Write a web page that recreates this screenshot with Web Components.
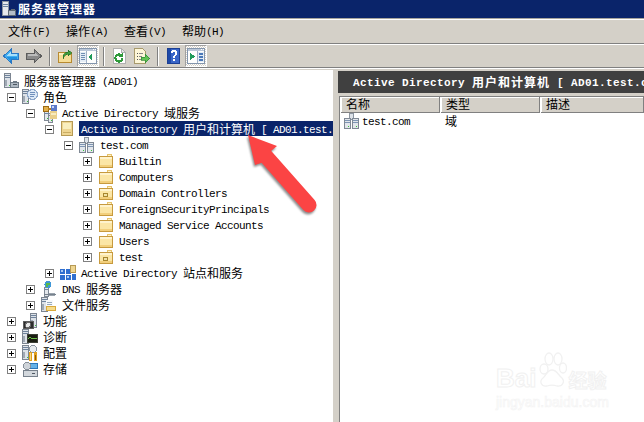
<!DOCTYPE html>
<html lang="zh">
<head>
<meta charset="utf-8">
<title>服务器管理器</title>
<style>
  html, body { margin: 0; padding: 0; width: 644px; height: 422px; overflow: hidden; background: #d4d0c8; }
  body { font: 12px/16px "Noto Sans CJK SC", "Liberation Sans", sans-serif; color: #000; }
</style>
</head>
<body>

<mmc-window>
  <mmc-titlebar slot="title">服务器管理器</mmc-titlebar>
  <mmc-menubar slot="menu">
    <menu-item>文件<la-t>(F)</la-t></menu-item>
    <menu-item>操作<la-t>(A)</la-t></menu-item>
    <menu-item>查看<la-t>(V)</la-t></menu-item>
    <menu-item>帮助<la-t>(H)</la-t></menu-item>
  </mmc-menubar>
  <mmc-toolbar slot="tools">
    <tool-btn icon="back"></tool-btn>
    <tool-btn icon="forward"></tool-btn>
    <tool-sep></tool-sep>
    <tool-btn icon="up"></tool-btn>
    <tool-btn icon="paneleft" pressed></tool-btn>
    <tool-sep></tool-sep>
    <tool-btn icon="refresh"></tool-btn>
    <tool-btn icon="export"></tool-btn>
    <tool-sep></tool-sep>
    <tool-btn icon="help"></tool-btn>
    <tool-btn icon="paneright" pressed></tool-btn>
  </mmc-toolbar>

  <mmc-tree slot="tree">
    <tree-row level="-1" icon="server"><span>服务器管理器<la-t> (AD01)</la-t></span></tree-row>
    <tree-row level="0" state="minus" icon="roles">角色</tree-row>
    <tree-row level="1" state="minus" icon="adds"><span><la-t>Active Directory </la-t>域服务</span></tree-row>
    <tree-row level="2" state="minus" icon="aduc" selected><span><la-t>Active Directory </la-t>用户和计算机<la-t> [ AD01.test.</la-t></span></tree-row>
    <tree-row level="3" state="minus" icon="domain"><la-t>test.com</la-t></tree-row>
    <tree-row level="4" state="plus" icon="folder"><la-t>Builtin</la-t></tree-row>
    <tree-row level="4" state="plus" icon="folder"><la-t>Computers</la-t></tree-row>
    <tree-row level="4" state="plus" icon="ou"><la-t>Domain Controllers</la-t></tree-row>
    <tree-row level="4" state="plus" icon="folder"><la-t>ForeignSecurityPrincipals</la-t></tree-row>
    <tree-row level="4" state="plus" icon="folder"><la-t>Managed Service Accounts</la-t></tree-row>
    <tree-row level="4" state="plus" icon="folder"><la-t>Users</la-t></tree-row>
    <tree-row level="4" state="plus" icon="ou"><la-t>test</la-t></tree-row>
    <tree-row level="2" state="plus" icon="sites"><span><la-t>Active Directory </la-t>站点和服务</span></tree-row>
    <tree-row level="1" state="plus" icon="dns"><span><la-t>DNS </la-t>服务器</span></tree-row>
    <tree-row level="1" state="plus" icon="files">文件服务</tree-row>
    <tree-row level="0" state="plus" icon="features">功能</tree-row>
    <tree-row level="0" state="plus" icon="diag">诊断</tree-row>
    <tree-row level="0" state="plus" icon="config">配置</tree-row>
    <tree-row level="0" state="plus" icon="storage">存储</tree-row>
  </mmc-tree>

  <mmc-details slot="details">
    <span slot="heading"><la-t>Active Directory </la-t>用户和计算机<la-t> [ AD01.test.c</la-t></span>
    <list-head slot="cols" style="width:99px;padding-left:5px">名称</list-head>
    <list-head slot="cols" style="width:99px">类型</list-head>
    <list-head slot="cols" style="flex:1">描述</list-head>
    <list-row slot="rows" icon="domain" kind="域"><la-t>test.com</la-t></list-row>
  </mmc-details>

  <red-arrow slot="over"></red-arrow>
  <baidu-mark slot="over"></baidu-mark>
</mmc-window>

<script>
// little helper, every element below does the same thing in its constructor
function shadow(el, html) {
  el.attachShadow({ mode: 'open' });
  el.shadowRoot.innerHTML = html;
}

const r = (x, y, w, h, c) => `<rect x="${x}" y="${y}" width="${w}" height="${h}" fill="${c}"/>`;

// tower shape shared by the role icons
const tower = (x, y) =>
  r(x, y, 7, 15, '#7c8591') + r(x + 1, y + 1, 5, 13, '#dde2e8') + r(x + 1, y + 2, 5, 1, '#6f839c') +
  r(x + 1, y + 4, 5, 1, '#6f839c') + r(x + 5, y + 12, 1, 1, '#3ac43a') + r(x + 1, y + 7, 2, 6, '#a0a9b4');

const small = (x, y) =>
  r(x, y, 5, 10, '#7f8894') + r(x + 1, y + 1, 3, 8, '#e3e7ec') + r(x + 1, y + 2, 3, 1, '#6f86a4') + r(x + 3, y + 7, 1, 1, '#35c335');

const folderBody =
  r(9, 1, 5, 2, '#e6c36e') + r(10, 2, 3, 1, '#fff3c8') +
  r(1, 3, 14, 12, '#c79a3e') + r(2, 4, 12, 10, '#fbe6a6') + r(2, 4, 12, 2, '#fff3cd') + r(2, 12, 12, 2, '#f2cf7c');

// window with a scope pane, shared by the two pressed buttons
const paneWin =
  r(-1, 0, 18, 16, '#8496ad') + r(0, 1, 16, 2, '#b9c6d8') + r(13, 1, 1, 1, '#fff') + r(15, 1, 1, 1, '#fff') + r(0, 3, 16, 12, '#fdfdfd');

const ICONS = {
  back: `<path d="M.5 8 8 1.500V5h7.500v6H8v3.500z" fill="#42aef0" stroke="#2b78c4"/><path d="M3 8 7.500 4v2H14v2H4z" fill="#a6e0fc"/><path d="M3 8.500h11v2H7.500V13z" fill="#1e90e0"/>`,
  forward: `<path d="M15.500 8 8 1.500V5H.5v6H8v3.500z" fill="#8a8a8a" stroke="#5c5c5c"/><path d="M13 8 8.500 4v2H2v2h10z" fill="#bcbcbc"/>`,
  up: r(1, 4, 14, 11, '#b88a30') + r(2, 5, 12, 9, '#f6dd96') + r(2, 5, 5, 2, '#fff0c0') +
      `<path d="M6 11c0-5 2-7 5-7V2l4 3-4 3V6c-1 0-3 1-5 5z" fill="#3f9a3f" stroke="#1f6f1f" stroke-width=".6"/>`,
  paneleft: paneWin + r(0, 4, 6, 10, '#e4ecf5') + r(1, 5, 4, 1, '#6f8db3') + r(1, 7, 4, 1, '#6f8db3') + r(1, 9, 4, 1, '#6f8db3') + r(1, 11, 4, 1, '#6f8db3') + r(6, 3, 1, 12, '#9fb0c6') + `<path d="M12 6v6L8 9z" fill="#1f9a5a"/>`,
  paneright: paneWin + r(10, 4, 6, 10, '#e4ecf5') + r(11, 5, 4, 2, '#4a78b8') + r(11, 8, 4, 2, '#4a78b8') + r(11, 11, 4, 2, '#4a78b8') + r(9, 3, 1, 12, '#9fb0c6') + `<path d="M2 5v7l5-3.500z" fill="#1f9a5a"/>`,
  refresh: `<path d="M2 .5h8l4 4v11H2z" fill="#fff" stroke="#b0b0b0"/><path d="M10 .5v4h4" fill="#e7e7e7" stroke="#b0b0b0"/>` +
      `<path d="M11.500 10a3.600 3.600 0 1 1-1.200-2.700" fill="none" stroke="#2f9a3a" stroke-width="2.200"/><path d="M12 4.500v4.500H8z" fill="#2f9a3a"/>`,
  export: `<path d="M.5 .5h8l3 3v12H.5z" fill="#fdf6d8" stroke="#a89a6c"/>` + r(3, 5, 1, 1, '#555') + r(5, 5, 4, 1, '#888') + r(3, 8, 1, 1, '#555') + r(5, 8, 3, 1, '#888') + r(3, 11, 1, 1, '#555') + r(5, 11, 2, 1, '#888') +
      `<path d="M7 9h4V6l5 4.500-5 4.500v-3H7z" fill="#62c255" stroke="#2f8a35" stroke-width=".7"/>`,
  help: r(2, 0, 13, 16, '#1c3f94') + r(3, 1, 11, 14, '#3a66c8') + r(3, 1, 3, 14, '#1f4aa8') +
      `<path d="M6.500 5c0-3 5-3 5 0 0 2-2.500 2-2.500 4.500" fill="none" stroke="#fff" stroke-width="1.800"/>` + r(8, 11, 2, 2, '#fff'),
  server: tower(1, 0) + r(7, 9, 9, 6, '#6e7a86') + r(8, 10, 7, 4, '#aeb8c2') + r(10, 8, 4, 1, '#6e7a86') + r(10, 11, 4, 1, '#4d5863'),
  roles: tower(0, 0) + `<circle cx="10.500" cy="5.500" r="5" fill="#dce8f6" stroke="#8fa9cc"/><path d="M8 3.500h5M8 5.500h5M8 7.500h4" stroke="#6f8fbc"/>`,
  adds: small(3, 6) + small(7, 8) + `<circle cx="5" cy="4" r="3" fill="#e3b04a" stroke="#9c6a14"/>` + r(7, 3, 6, 2, '#b77f20') + r(10, 0, 6, 6, '#5b78c8') + r(11, 1, 2, 2, '#c7d5f5') +
      r(9, 6, 7, 8, '#e9cf8a') + r(10, 8, 5, 2, '#f7ebc0'),
  aduc: r(1, 0, 12, 15, '#b69a55') + r(2, 1, 10, 13, '#eed591') + r(3, 2, 8, 6, '#f9eebe') + r(3, 11, 8, 1, '#c9ac63'),
  domain: r(5, 0, 5, 7, '#8c95a0') + r(6, 1, 3, 5, '#dde2e8') + r(0, 5, 7, 11, '#7f8894') + r(1, 6, 5, 9, '#e2e6eb') + r(1, 7, 5, 1, '#7e95b4') + r(1, 9, 5, 1, '#7e95b4') + r(4, 13, 1, 1, '#34c634') +
      r(8, 5, 7, 11, '#7f8894') + r(9, 6, 5, 9, '#e2e6eb') + r(9, 7, 5, 1, '#7e95b4') + r(9, 9, 5, 1, '#7e95b4') + r(12, 13, 1, 1, '#34c634'),
  folder: folderBody,
  ou: folderBody + r(5, 8, 5, 4, '#a8862f') + r(6, 9, 3, 2, '#f1e3a8'),
  sites: r(0, 4, 5, 5, '#2f6fd0') + r(0, 10, 5, 5, '#2f6fd0') + r(6, 4, 5, 5, '#2f6fd0') + r(6, 10, 5, 5, '#2f6fd0') + r(1, 5, 2, 2, '#a9c9f2') + r(7, 11, 2, 2, '#a9c9f2') +
      r(12, 9, 4, 6, '#2f6fd0') + r(10, 0, 6, 8, '#b69a55') + r(11, 1, 4, 6, '#eed591'),
  dns: small(3, 6) + `<circle cx="7" cy="3.500" r="3.500" fill="#3f97d8"/><path d="M5 2h4v2H7v2H5z" fill="#58b84b"/>` + r(8, 12, 6, 3, '#9aa4ae') + r(3, 13, 12, 1, '#77818c'),
  files: tower(0, 0) + r(5, 3, 7, 7, '#f6f8fb') + r(6, 5, 5, 1, '#9ab') + r(6, 7, 5, 1, '#9ab') + r(5, 9, 10, 5, '#d9a93c') + r(6, 10, 8, 3, '#f6db8a'),
  features: tower(8, 0) + r(1, 8, 11, 8, '#5e5e5e') + r(2, 9, 9, 6, '#2d2d2d') + `<circle cx="6" cy="12" r="2.500" fill="#e8e8e8" stroke="#666"/>`,
  diag: tower(0, 0) + r(5, 5, 11, 9, '#3d4036') + r(6, 6, 9, 7, '#1a1d12') + `<path d="M6 10l2-2 2 2 2-1 3 1" fill="none" stroke="#6ec24a"/>`,
  config: tower(0, 0) + `<circle cx="11" cy="4" r="3.500" fill="#e8ecef" stroke="#8b95a0"/>` + r(7, 7, 3, 9, '#e2a21f') + r(12, 7, 3, 9, '#e2a21f') + r(8, 8, 1, 7, '#f8d880') + r(13, 10, 1, 5, '#8a5a10'),
  storage: r(1, 9, 15, 7, '#77818c') + r(2, 10, 13, 5, '#d3d8dd') + r(10, 12, 3, 1, '#4f5964') + r(5, 2, 11, 6, '#2d77b8') + r(6, 3, 9, 4, '#66b2e8') +
      `<circle cx="5" cy="5" r="3.500" fill="#cfd4d9" stroke="#8a929a"/>`
};

// 11px mono squeezed to 6px a letter, next to 12px CJK: same ratio as the old bitmap font
class LaT extends HTMLElement {
  constructor() {
    super();
    shadow(this, `<style>:host{font-family:"Liberation Mono",monospace;font-size:11px;letter-spacing:calc(var(--ls, 0px) - .6px);white-space:pre;vertical-align:1px}</style><slot></slot>`);
  }
}
customElements.define('la-t', LaT);

class MmcIcon extends HTMLElement {
  static get observedAttributes() { return ['name']; }
  constructor() {
    super();
    this.attachShadow({ mode: 'open' });
  }
  attributeChangedCallback() {
    this.shadowRoot.innerHTML = `<style>:host{display:block;width:16px;height:16px}svg{display:block;overflow:visible}</style>
      <svg width="16" height="16" viewBox="0 0 16 16" shape-rendering="crispEdges">${ICONS[this.getAttribute('name')] || ''}</svg>`;
  }
}
customElements.define('mmc-icon', MmcIcon);

class MmcWindow extends HTMLElement {
  constructor() {
    super();
    shadow(this, `<style>
      :host { display: flex; flex-direction: column; position: relative; width: 644px; height: 422px; overflow: hidden; background: #d4d0c8; }
      .panes { flex: 1; display: flex; min-height: 0; border-top: 1px solid #fff; }
    </style>
    <slot name="title"></slot><slot name="menu"></slot><slot name="tools"></slot>
    <div class="panes"><slot name="tree"></slot><slot name="details"></slot></div>
    <slot name="over"></slot>`);
  }
}
customElements.define('mmc-window', MmcWindow);

class MmcTitlebar extends HTMLElement {
  constructor() {
    super();
    shadow(this, `<style>
      :host { display: flex; align-items: center; gap: 2px; height: 18px; padding-left: 2px; background: #0a246a; color: #fff; font-weight: 700; font-size: 12px; letter-spacing: 1px; }
      svg { display: block; }
    </style>
    <svg width="14" height="16" viewBox="0 0 14 16" shape-rendering="crispEdges">
      ${r(0, 0, 7, 15, '#8a93a0') + r(1, 1, 5, 13, '#e6e9ee') + r(1, 3, 5, 1, '#6f86a4') + r(1, 5, 5, 1, '#6f86a4') + r(6, 9, 8, 6, '#5f6a75') + r(7, 10, 6, 4, '#b5bec8') + r(9, 8, 4, 1, '#5f6a75')}
    </svg>
    <slot></slot>`);
  }
}
customElements.define('mmc-titlebar', MmcTitlebar);

class MmcMenubar extends HTMLElement {
  constructor() {
    super();
    shadow(this, `<style>
      :host { display: flex; gap: 16px; height: 24px; padding: 0 0 0 8px; align-items: center; background: #d4d0c8; border-top: 1px solid #a8a59e; border-bottom: 1px solid #808080; box-shadow: inset 0 1px 0 #fff; }
    </style><slot></slot>`);
  }
}
customElements.define('mmc-menubar', MmcMenubar);

class MenuItem extends HTMLElement {
  constructor() {
    super();
    shadow(this, `<style>:host{display:block;padding-top:1px}</style><slot></slot>`);
  }
}
customElements.define('menu-item', MenuItem);

class MmcToolbar extends HTMLElement {
  constructor() {
    super();
    shadow(this, `<style>
      :host { display: flex; gap: 1px; height: 22px; align-items: center; background: #d4d0c8; border-top: 1px solid #fff; border-bottom: 1px solid #808080; }
    </style><slot></slot>`);
  }
}
customElements.define('mmc-toolbar', MmcToolbar);

class ToolBtn extends HTMLElement {
  constructor() {
    super();
    shadow(this, `<style>
      :host { display: flex; width: 22px; height: 22px; box-sizing: border-box; align-items: center; justify-content: center; }
      :host([pressed]) { background: repeating-conic-gradient(#fff 0 25%, #d4d0c8 0 50%) 0 0 / 2px 2px; border: 1px solid; border-color: #a0a0a0 #fff #fff #a0a0a0; }
    </style><mmc-icon name="${this.getAttribute('icon')}"></mmc-icon>`);
  }
}
customElements.define('tool-btn', ToolBtn);

class ToolSep extends HTMLElement {
  constructor() {
    super();
    shadow(this, `<style>
      :host { display: block; width: 1px; height: 19px; margin: 0 2px 0 3px; background: #808080; border-right: 1px solid #fff; }
    </style>`);
  }
}
customElements.define('tool-sep', ToolSep);

class MmcTree extends HTMLElement {
  constructor() {
    super();
    shadow(this, `<style>
      :host { display: block; box-sizing: border-box; width: 333px; margin-top: 1px; padding-top: 3px; background: #fff; overflow: hidden; }
    </style><slot></slot>`);
  }
}
customElements.define('mmc-tree', MmcTree);

class TreeRow extends HTMLElement {
  constructor() {
    super();
    const level = Number(this.getAttribute('level'));
    const state = this.getAttribute('state');
    const bar = state === 'plus'
      ? '<i class="h"></i><i class="v"></i>'
      : state === 'minus' ? '<i class="h"></i>' : '';
    const left = level < 0 ? 3 : 7 + level * 19;
    const iconOff = level < 0 ? 0 : 6;
    shadow(this, `<style>
      :host { display: flex; align-items: center; height: 16px; padding-left: ${left}px; white-space: nowrap; }
      .box { position: relative; flex: none; width: 9px; height: 9px; box-sizing: border-box; margin-right: ${iconOff}px; border: 1px solid #808080; background: #fff; }
      .box i { position: absolute; background: #000; }
      .h { left: 1px; top: 3px; width: 5px; height: 1px; }
      .v { left: 3px; top: 1px; width: 1px; height: 5px; }
      .label { margin-left: 3px; padding: 0 2px; height: 15px; line-height: 15px; flex: none; align-self: flex-start; }
      :host([selected]) .label { flex: 1; background: #0a246a; color: #fff; }
    </style>
    ${state ? `<div class="box">${bar}</div>` : ''}
    <mmc-icon name="${this.getAttribute('icon')}"></mmc-icon>
    <div class="label"><slot></slot></div>`);
  }
}
customElements.define('tree-row', TreeRow);

class MmcDetails extends HTMLElement {
  constructor() {
    super();
    shadow(this, `<style>
      :host { display: flex; flex-direction: column; flex: 1; min-width: 0; margin-left: 5px; margin-top: 2px; }
      .head { --ls: 1px; height: 22px; line-height: 22px; padding-left: 15px; background: #404040; color: #fff; font-weight: 700; letter-spacing: 1px; white-space: nowrap; overflow: hidden; flex: none; }
      .body { flex: 1; margin-top: 3px; margin-left: 1px; background: #fff; border-left: 1px solid #808080; border-top: 1px solid #808080; }
      .cols { display: flex; height: 16px; gap: 1px; padding-left: 1px; }
    </style>
    <div class="head"><slot name="heading"></slot></div>
    <div class="body">
      <div class="cols"><slot name="cols"></slot></div>
      <slot name="rows"></slot>
    </div>`);
  }
}
customElements.define('mmc-details', MmcDetails);

class ListHead extends HTMLElement {
  constructor() {
    super();
    shadow(this, `<style>
      :host { display: block; box-sizing: border-box; height: 16px; padding-left: 5px; line-height: 14px; background: #d4d0c8; border-right: 1px solid #808080; border-bottom: 1px solid #808080; box-shadow: inset 1px 1px 0 #fff; }
    </style><slot></slot>`);
  }
}
customElements.define('list-head', ListHead);

class ListRow extends HTMLElement {
  constructor() {
    super();
    shadow(this, `<style>
      :host { display: flex; height: 16px; padding: 0 0 0 4px; align-items: center; }
      .name { width: 83px; margin-left: 2px; }
    </style>
    <mmc-icon name="${this.getAttribute('icon')}"></mmc-icon>
    <div class="name"><slot></slot></div>
    <div>${this.getAttribute('kind')}</div>`);
  }
}
customElements.define('list-row', ListRow);

class RedArrow extends HTMLElement {
  constructor() {
    super();
    shadow(this, `<style>
      :host { position: absolute; left: 240px; top: 128px; width: 90px; height: 95px; pointer-events: none; }
      svg { display: block; filter: drop-shadow(-1px 2px 1px rgba(0,0,0,.45)); }
    </style>
    <svg width="90" height="95" viewBox="240 128 90 95">
      <path d="M248 135 277 146 268.500 153 264 162 255 165z" fill="#fb4444"/>
      <path d="M263 153 309 205" stroke="#fb4444" stroke-width="15" stroke-linecap="round"/>
    </svg>`);
  }
}
customElements.define('red-arrow', RedArrow);

class BaiduMark extends HTMLElement {
  constructor() {
    super();
    shadow(this, `<style>
      :host { position: absolute; left: 496px; top: 352px; width: 120px; height: 56px; color: #fff; font-family: "Liberation Sans", sans-serif; pointer-events: none; }
      .top { display: flex; align-items: flex-end; height: 38px; }
      .bai { font-size: 26px; line-height: 24px; font-weight: 700; -webkit-text-stroke: 1px #f1f1f1; }
      svg { flex: none; margin: 0 1px 0 1px; }
      .jy { font: 700 19px/21px "Noto Sans CJK SC", sans-serif; -webkit-text-stroke: 1px #f1f1f1; }
      .url { margin-top: 5px; font-size: 14px; line-height: 14px; -webkit-text-stroke: .6px #f3f3f3; }
    </style>
    <div class="top"><span class="bai">Bai</span>
      <svg width="30" height="38" viewBox="0 0 30 38" fill="none" stroke="#f1f1f1" stroke-width="1.300">
        <ellipse cx="7" cy="17" rx="4" ry="5"/><ellipse cx="12" cy="7" rx="4" ry="6"/><ellipse cx="21" cy="7" rx="4" ry="6"/><ellipse cx="26" cy="16" rx="3.500" ry="5"/>
        <path d="M15 18c5 0 6 5 10 8 3 3 1 9-5 8-3-1-7-1-10 0-6 1-8-5-4-8 3-2 4-8 9-8z"/>
      </svg>
      <span class="jy">经验</span></div>
    <div class="url">jingyan.baidu.com</div>`);
  }
}
customElements.define('baidu-mark', BaiduMark);
</script>
</body>
</html>
